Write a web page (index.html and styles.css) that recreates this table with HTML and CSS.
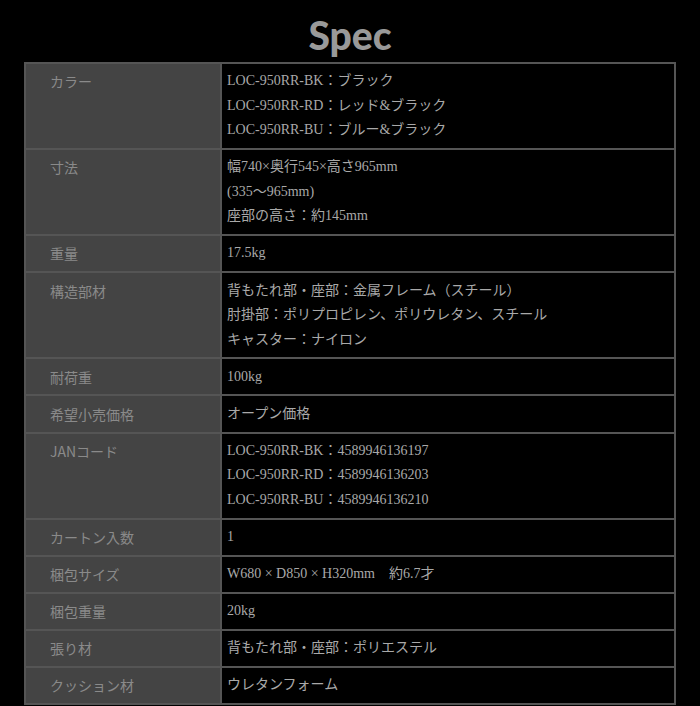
FILE: index.html
```html
<!DOCTYPE html>
<html lang="ja">
<head>
<meta charset="utf-8">
<link rel="stylesheet" href="styles.css">
</head>
<body>
<h2 class="title">Spec</h2>
<table class="spec">
<tr><th>カラー</th><td>LOC-950RR-BK：ブラック<br>LOC-950RR-RD：レッド&amp;ブラック<br>LOC-950RR-BU：ブルー&amp;ブラック</td></tr>
<tr><th>寸法</th><td>幅740×奥行545×高さ965mm<br>(335〜965mm)<br>座部の高さ：約145mm</td></tr>
<tr><th>重量</th><td>17.5kg</td></tr>
<tr><th>構造部材</th><td>背もたれ部・座部：金属フレーム（スチール）<br>肘掛部：ポリプロピレン、ポリウレタン、スチール<br>キャスター：ナイロン</td></tr>
<tr><th>耐荷重</th><td>100kg</td></tr>
<tr><th>希望小売価格</th><td>オープン価格</td></tr>
<tr><th>JANコード</th><td>LOC-950RR-BK：4589946136197<br>LOC-950RR-RD：4589946136203<br>LOC-950RR-BU：4589946136210</td></tr>
<tr><th>カートン入数</th><td>1</td></tr>
<tr><th>梱包サイズ</th><td>W680 × D850 × H320mm　約6.7才</td></tr>
<tr><th>梱包重量</th><td>20kg</td></tr>
<tr><th>張り材</th><td>背もたれ部・座部：ポリエステル</td></tr>
<tr><th>クッション材</th><td>ウレタンフォーム</td></tr>
</table>
</body>
</html>
```
FILE: styles.css
```css
html, body {
  margin: 0;
  padding: 0;
  background: #000;
}
body {
  font-family: "Liberation Serif", "Noto Sans CJK JP", serif;
  color: #a9a9a9;
}
.title {
  margin: 0;
  height: 62px;
  line-height: 70px;
  text-align: center;
  font-family: Lato, "Noto Sans", sans-serif;
  font-weight: 900;
  font-size: 39px;
  color: #999;
}
.spec {
  margin-left: 24px;
  width: 652px;
  border-collapse: collapse;
  border: 2px solid #555;
  font-size: 14px;
  line-height: 24.5px;
}
.spec th, .spec td {
  border: 2px solid #555;
  vertical-align: top;
  padding: 5.3px 6px 5.3px 5px;
  text-align: left;
  font-weight: normal;
}
.spec th {
  width: 164px;
  background: #444;
  color: #8a8a8a;
  padding-left: 24px;
  font-family: "Noto Sans CJK JP", sans-serif;
  font-size: 14px;
}
.spec td {
  background: #000;
}
```
